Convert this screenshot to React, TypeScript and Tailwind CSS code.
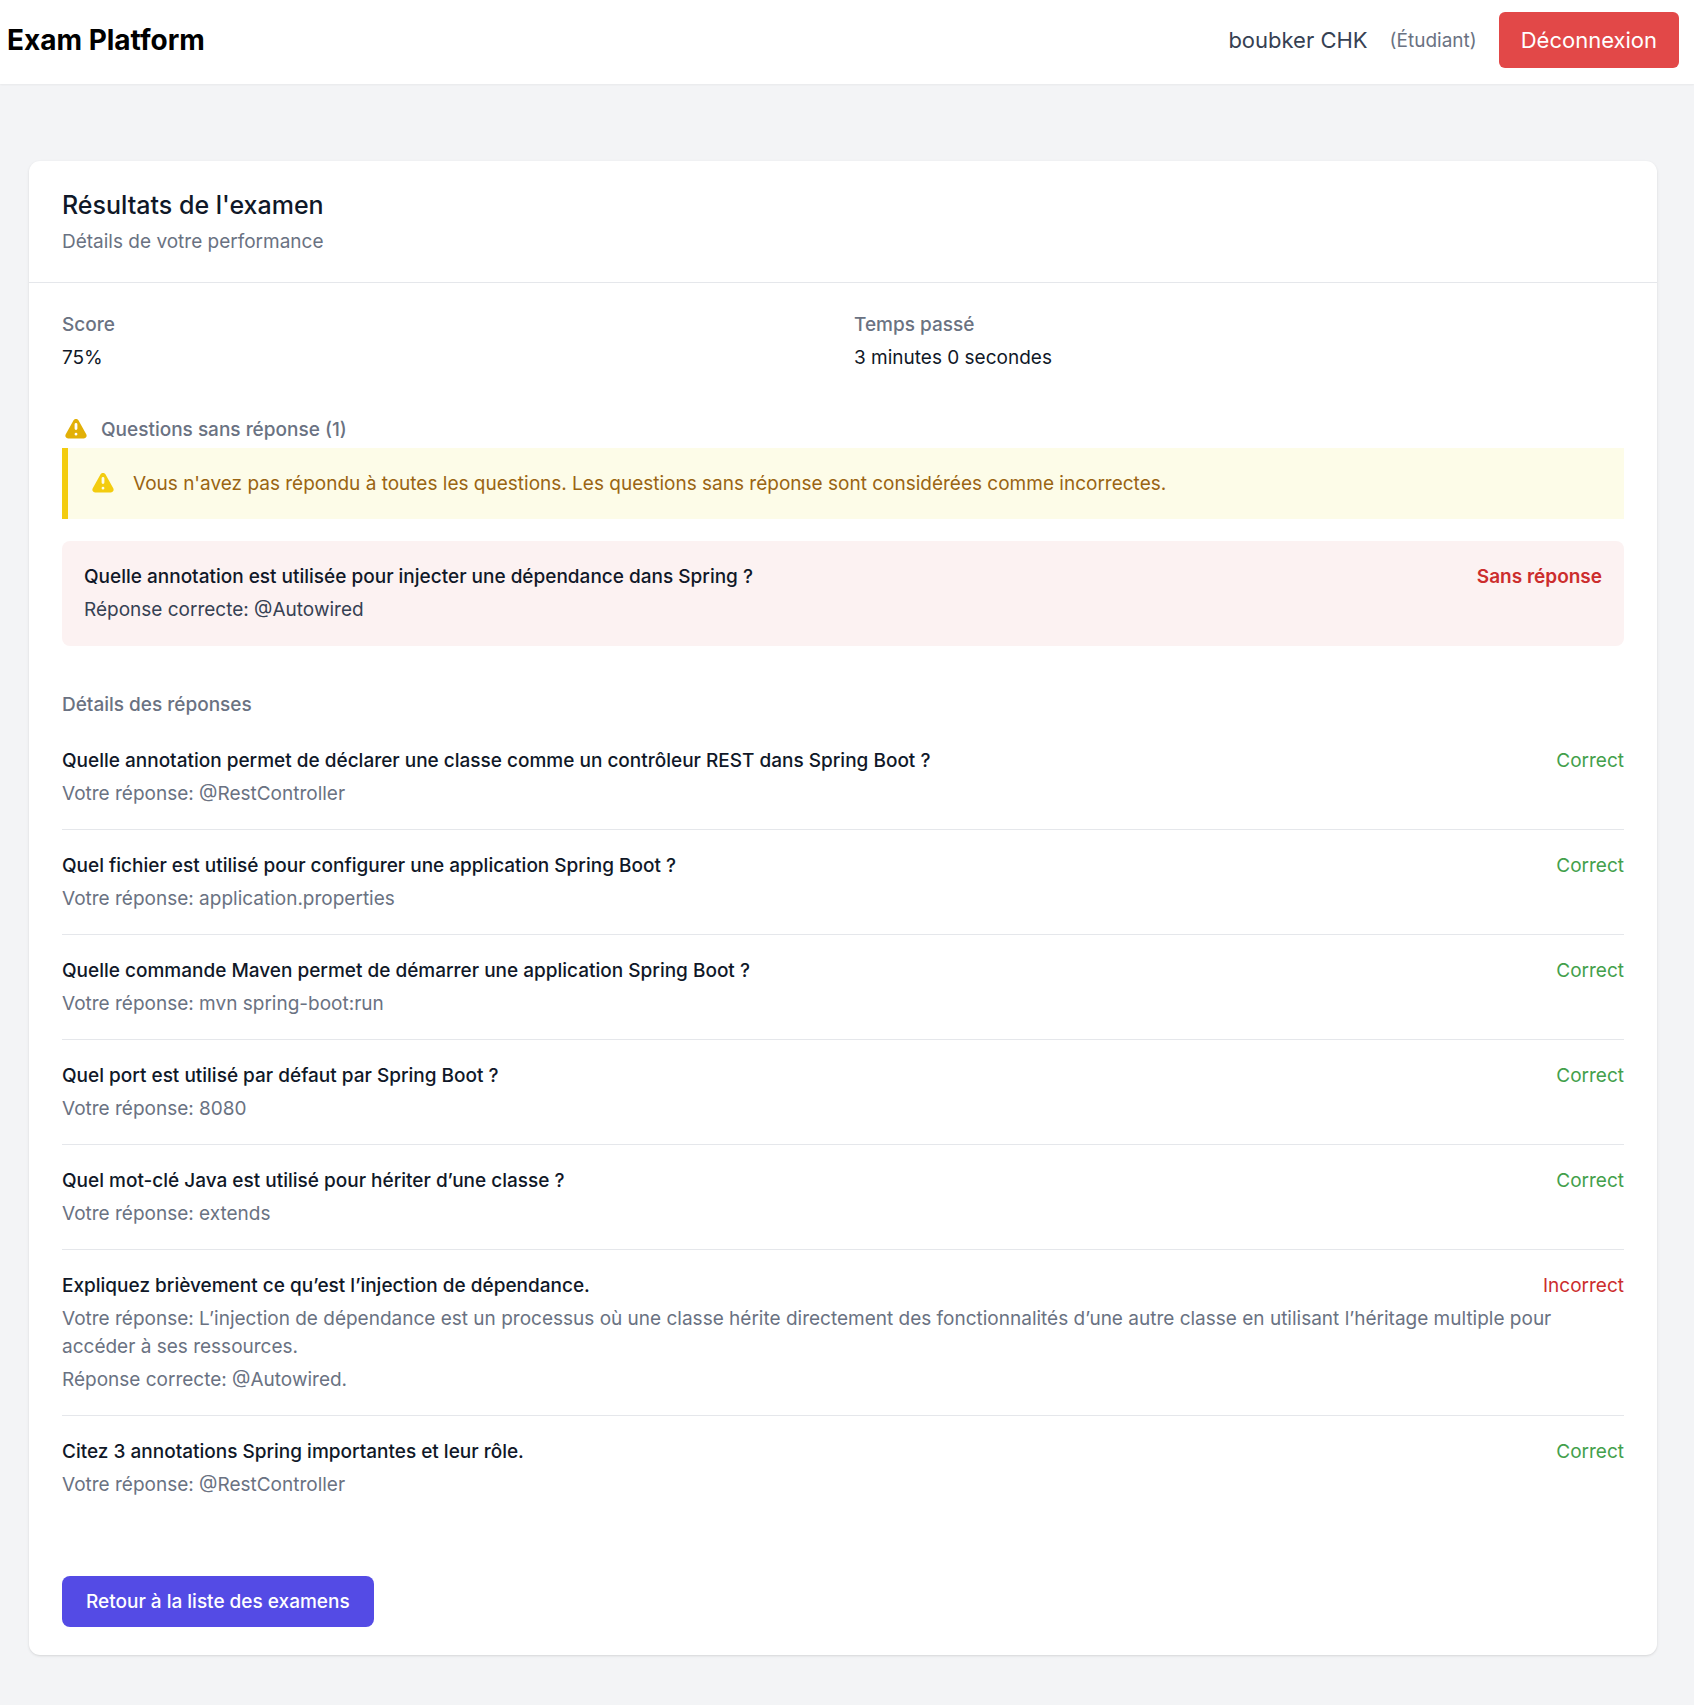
import { HiExclamation } from "react-icons/hi";

type Answer = {
  question: string;
  answer: string;
  correct: boolean;
  expected?: string;
};

const answers: Answer[] = [
  {
    question: "Quelle annotation permet de déclarer une classe comme un contrôleur REST dans Spring Boot ?",
    answer: "@RestController",
    correct: true,
  },
  {
    question: "Quel fichier est utilisé pour configurer une application Spring Boot ?",
    answer: "application.properties",
    correct: true,
  },
  {
    question: "Quelle commande Maven permet de démarrer une application Spring Boot ?",
    answer: "mvn spring-boot:run",
    correct: true,
  },
  { question: "Quel port est utilisé par défaut par Spring Boot ?", answer: "8080", correct: true },
  { question: "Quel mot-clé Java est utilisé pour hériter d’une classe ?", answer: "extends", correct: true },
  {
    question: "Expliquez brièvement ce qu’est l’injection de dépendance.",
    answer:
      "L’injection de dépendance est un processus où une classe hérite directement des fonctionnalités d’une autre classe en utilisant l’héritage multiple pour accéder à ses ressources.",
    correct: false,
    expected: "@Autowired.",
  },
  {
    question: "Citez 3 annotations Spring importantes et leur rôle.",
    answer: "@RestController",
    correct: true,
  },
];

function Header() {
  return (
    <header className="flex items-center justify-between bg-white pt-3 pr-[15px] pb-4 pl-[7px] shadow-xs">
      <span className="text-[28px] leading-[39px] font-bold text-black">Exam Platform</span>
      <div className="flex items-center gap-[22px]">
        <span className="text-[22px] leading-[33px] text-gray-700">boubker CHK</span>
        <span className="text-[19px] leading-[33px] text-gray-500">(Étudiant)</span>
        <button
          type="button"
          className="h-14 cursor-pointer rounded-[6px] bg-[#e24848] px-[22px] text-[22px] leading-[33px] text-white"
        >
          Déconnexion
        </button>
      </div>
    </header>
  );
}

function AnswerRow({ item }: { item: Answer }) {
  return (
    <li className="pt-[22px] pb-[21px]">
      <div className="flex justify-between gap-4">
        <p className="font-medium text-gray-900">{item.question}</p>
        <span className={item.correct ? "text-[#43a04b]" : "text-[#cc2d2d]"}>
          {item.correct ? "Correct" : "Incorrect"}
        </span>
      </div>
      <p className="mt-[5px] text-gray-500">{`Votre réponse: ${item.answer}`}</p>
      {item.expected && <p className="mt-[5px] text-gray-500">{`Réponse correcte: ${item.expected}`}</p>}
    </li>
  );
}

export default function App() {
  return (
    <div className="min-h-screen bg-gray-100 font-['Inter',sans-serif]">
      <Header />
      <main className="pt-[77px] pr-[37px] pb-[50px] pl-[29px] text-[19px] leading-[28px]">
        <section className="rounded-[11px] bg-white shadow-sm">
          <div className="border-b border-gray-200 px-[33px] pt-7 pb-[26px]">
            <h1 className="text-[25px] leading-[33px] font-medium text-gray-900">Résultats de l'examen</h1>
            <p className="mt-[6px] text-gray-500">Détails de votre performance</p>
          </div>

          <div className="px-[33px] py-7">
            <dl className="grid grid-cols-2 gap-x-[22px]">
              <div>
                <dt className="font-medium text-gray-500">Score</dt>
                <dd className="mt-[5px] text-gray-900">75%</dd>
              </div>
              <div>
                <dt className="font-medium text-gray-500">Temps passé</dt>
                <dd className="mt-[5px] text-gray-900">3 minutes 0 secondes</dd>
              </div>
            </dl>

            <h2 className="mt-11 flex items-center gap-[11px] font-medium text-gray-500">
              <HiExclamation className="size-7 text-[#e2b007]" aria-hidden="true" />
              Questions sans réponse (1)
            </h2>
            <div className="mt-1 flex items-start gap-4 border-l-[6px] border-[#f3cc0f] bg-[#fdfce8] px-[21px] pt-[22px] pb-[21px]">
              <HiExclamation className="size-7 text-[#f3cc0f]" aria-hidden="true" />
              <p className="text-[#9a6412]">
                Vous n'avez pas répondu à toutes les questions. Les questions sans réponse sont considérées comme
                incorrectes.
              </p>
            </div>
            <div className="mt-[22px] rounded-[8px] bg-[#fcf2f2] px-[22px] pt-[22px] pb-[22px]">
              <div className="flex justify-between gap-4">
                <p className="font-medium text-gray-900">
                  Quelle annotation est utilisée pour injecter une dépendance dans Spring ?
                </p>
                <span className="font-semibold text-[#cc2d2d]">Sans réponse</span>
              </div>
              <p className="mt-[5px] text-gray-700">Réponse correcte: @Autowired</p>
            </div>

            <h2 className="mt-[45px] font-medium text-gray-500">Détails des réponses</h2>
            <ul className="mt-[6px] divide-y divide-gray-200">
              {answers.map((item) => (
                <AnswerRow key={item.question} item={item} />
              ))}
            </ul>

            <button
              type="button"
              className="mt-14 cursor-pointer rounded-[8px] bg-[#544be5] px-6 pt-3 pb-[11px] font-medium text-white"
            >
              Retour à la liste des examens
            </button>
          </div>
        </section>
      </main>
    </div>
  );
}
